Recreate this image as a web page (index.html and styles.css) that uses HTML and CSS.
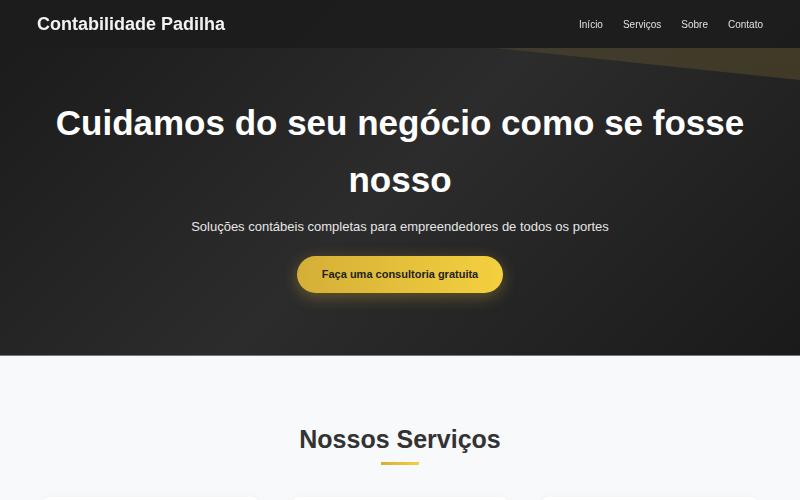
FILE: index.html
```html
<!DOCTYPE html>
<html lang="pt-BR">
<head>
<meta charset="utf-8">
<title>Contabilidade Padilha</title>
<link rel="stylesheet" href="styles.css">
</head>
<body>
<header class="site-header">
  <div class="logo">Contabilidade Padilha</div>
  <nav class="nav">
    <a href="#">Início</a>
    <a href="#">Serviços</a>
    <a href="#">Sobre</a>
    <a href="#">Contato</a>
  </nav>
</header>
<section class="hero">
  <div class="hero-content">
    <h1>Cuidamos do seu negócio como se fosse nosso</h1>
    <p>Soluções contábeis completas para empreendedores de todos os portes</p>
    <a class="cta" href="#">Faça uma consultoria gratuita</a>
  </div>
</section>
<section class="services">
  <h2>Nossos Serviços</h2>
  <div class="bar"></div>
  <div class="cards">
    <div class="card"></div>
    <div class="card"></div>
    <div class="card"></div>
  </div>
</section>
</body>
</html>
```
FILE: styles.css
```css
* { box-sizing: border-box; }
html, body { margin: 0; padding: 0; }
body {
  font-family: "Liberation Sans", Arial, sans-serif;
  background: #f8f9fa;
  color: #333;
  overflow: hidden;
}
.site-header {
  position: fixed;
  top: 0; left: 0; right: 0;
  height: 48px;
  display: flex;
  align-items: center;
  justify-content: space-between;
  padding: 0 37px;
  background: rgba(28, 28, 28, 0.92);
  z-index: 10;
}
.logo {
  color: #f2f2f2;
  font-size: 18px;
  font-weight: 700;
}
.nav { display: flex; gap: 20px; }
.nav a {
  color: #e0e0e0;
  text-decoration: none;
  font-size: 10px;
}
.hero {
  position: relative;
  height: 356px;
  background: linear-gradient(135deg, #1a1a1a 0%, #2c2c2c 50%, #1a1a1a 100%);
  border-bottom: 1px solid #777;
  display: flex;
  justify-content: center;
  overflow: hidden;
}
.hero::before {
  content: "";
  position: absolute;
  top: 0; left: 0; right: 0;
  height: 80px;
  background: linear-gradient(90deg, rgba(212,175,55,0.05), rgba(212,175,55,0.16));
  clip-path: polygon(61.9% 60%, 100% 60%, 100% 100%);
}
.hero-content {
  position: relative;
  text-align: center;
  padding-top: 94px;
}
.hero h1 {
  margin: 0;
  color: #fff;
  font-size: 35px;
  line-height: 57px;
  font-weight: 700;
  max-width: 720px;
}
.hero p {
  margin: 11px 0 0;
  color: #e6e6e6;
  font-size: 13px;
}
.cta {
  display: inline-block;
  margin-top: 22px;
  padding: 12px 25px;
  border-radius: 30px;
  background: linear-gradient(90deg, #d4af37, #f4d03f);
  color: #222;
  font-weight: 700;
  font-size: 11px;
  line-height: 13px;
  text-decoration: none;
  box-shadow: 0 4px 15px rgba(212,175,55,0.35);
}
.services {
  text-align: center;
  padding-top: 69px;
}
.services h2 {
  margin: 0;
  font-size: 25px;
  color: #333;
}
.bar {
  width: 38px;
  height: 3px;
  margin: 8px auto 0;
  background: linear-gradient(90deg, #d4af37, #f4d03f);
}
.cards {
  display: grid;
  grid-template-columns: repeat(3, 1fr);
  gap: 33px;
  padding: 0 42px;
  margin-top: 32px;
}
.card {
  height: 200px;
  background: #fff;
  border-radius: 8px;
  box-shadow: 0 5px 15px rgba(0,0,0,0.06);
}
```
